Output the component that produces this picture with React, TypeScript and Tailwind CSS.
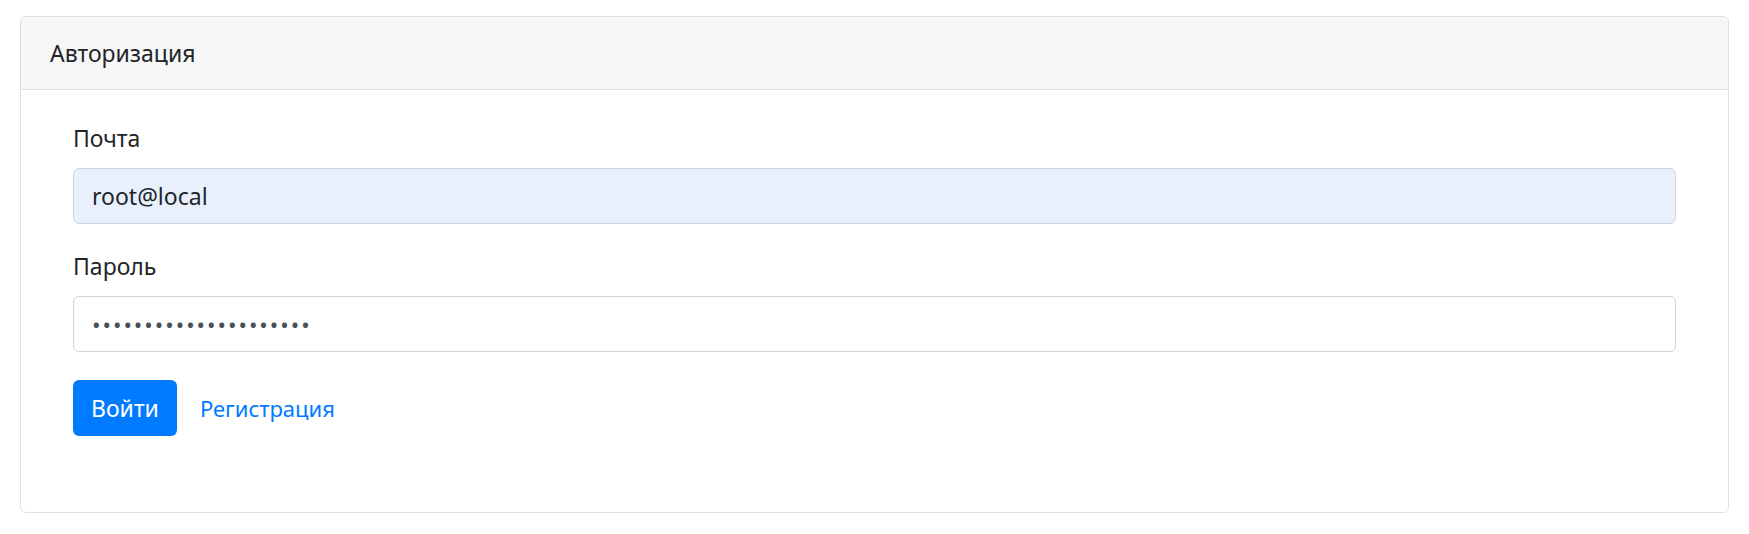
import React, { useState } from "react";

const App: React.FC = () => {
    const [email, setEmail] = useState<string>("root@local");
    const [password, setPassword] = useState<string>("qwertyuiopasdfghjklzx");

    return (
        <div
            className="min-h-screen bg-white pt-[16px] px-[20px] text-[#212529]"
            style={{ fontFamily: '"Noto Sans", "Open Sans", sans-serif' }}
        >
            <div className="border border-[#dfdfdf] rounded-[6px] overflow-hidden">
                <div className="bg-[#f7f7f7] border-b border-[#dfdfdf] px-[29px] py-[18px] text-[23px] leading-[36px]">
                    Авторизация
                </div>
                <form
                    className="px-[52px] pt-[30px] pb-[76px]"
                    onSubmit={(e) => e.preventDefault()}
                >
                    <div className="mb-[24px]">
                        <label htmlFor="email" className="block mb-[12px] text-[23px] leading-[36px]">
                            Почта
                        </label>
                        <input
                            id="email"
                            type="text"
                            value={email}
                            onChange={(e) => setEmail(e.target.value)}
                            className="block w-full h-[56px] px-[18px] bg-[#e8f0fe] border border-[#ced4da] rounded-[6px] text-[23px] text-[#212529] outline-none"
                        />
                    </div>
                    <div className="mb-[28px]">
                        <label htmlFor="password" className="block mb-[12px] text-[23px] leading-[36px]">
                            Пароль
                        </label>
                        <input
                            id="password"
                            type="password"
                            value={password}
                            onChange={(e) => setPassword(e.target.value)}
                            className="block w-full h-[56px] px-[18px] bg-white border border-[#ced4da] rounded-[6px] text-[22.5px] text-[#495057] outline-none tracking-[2px]"
                        />
                    </div>
                    <div className="flex items-center">
                        <button
                            type="submit"
                            className="h-[56px] px-[18px] bg-[#007bff] text-white rounded-[6px] text-[23px] leading-[36px]"
                        >
                            Войти
                        </button>
                        <a href="#" className="ml-[23px] text-[#007bff] text-[22px] leading-[36px]">
                            Регистрация
                        </a>
                    </div>
                </form>
            </div>
        </div>
    );
};

export default App;
